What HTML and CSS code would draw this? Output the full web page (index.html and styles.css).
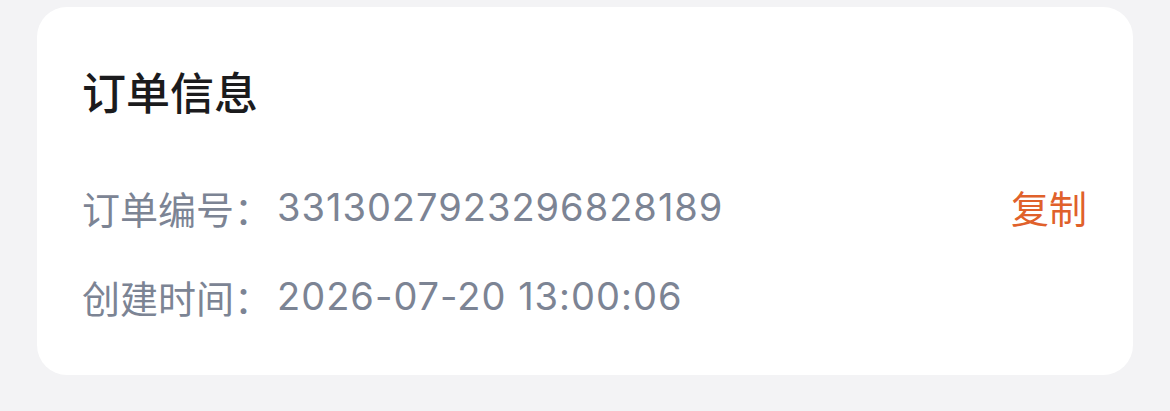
FILE: index.html
```html
<!DOCTYPE html>
<html lang="zh-CN">
<head>
<meta charset="utf-8">
<title>订单信息</title>
<link rel="stylesheet" href="styles.css">
</head>
<body>
  <section class="order-card">
    <h2 class="order-title">订单信息</h2>
    <div class="order-rows">
      <div class="order-row">
        <span class="order-label">订单编号：</span>
        <span class="order-value">3313027923296828189</span>
        <button class="copy-btn" type="button">复制</button>
      </div>
      <div class="order-row">
        <span class="order-label">创建时间：</span>
        <span class="order-value">2026-07-20 13:00:06</span>
      </div>
    </div>
  </section>
</body>
</html>
```

FILE: styles.css
```css
html, body {
  margin: 0;
  padding: 0;
}

body {
  width: 1170px;
  height: 411px;
  background: #f3f3f5;
  font-family: "Inter", "Noto Sans CJK SC", "Noto Sans", sans-serif;
  overflow: hidden;
}

.order-card {
  box-sizing: border-box;
  margin: 7px 0 0 37px;
  width: 1096px;
  height: 368px;
  background: #ffffff;
  border-radius: 30px;
  padding: 57px 46px 0 45px;
}

.order-title {
  margin: 0;
  font-size: 44px;
  line-height: 60px;
  font-weight: 500;
  color: #1b1b1d;
}

.order-rows {
  display: flex;
  flex-direction: column;
  gap: 39px;
  margin-top: 58px;
}

.order-row {
  display: flex;
  align-items: center;
  height: 50px;
  font-size: 38px;
  color: #7c8494;
}

.order-label {
  font-family: "Noto Sans CJK SC", sans-serif;
  font-weight: 400;
}

.order-value {
  margin-left: 5px;
  font-weight: 400;
  letter-spacing: 1px;
}

.copy-btn {
  margin-left: auto;
  padding: 0;
  border: 0;
  background: none;
  font-family: "Noto Sans CJK SC", sans-serif;
  font-size: 38px;
  color: #e0612b;
  line-height: 50px;
  cursor: pointer;
}
```
